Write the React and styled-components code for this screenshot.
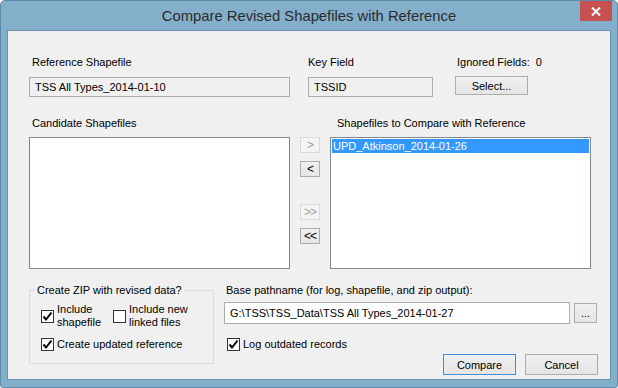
import React from 'react';
import styled, { createGlobalStyle } from 'styled-components';

const Global = createGlobalStyle`
  html, body { margin: 0; padding: 0; background: #ffffff; }
  body { font-family: "Liberation Sans", Arial, sans-serif; }
  * { box-sizing: border-box; }
`;

const UI_FONT = `"Liberation Sans", Arial, sans-serif`;

const Frame = styled.div`
  position: relative;
  width: 618px;
  height: 388px;
  background: #83afca;
  border: 1px solid #5f8bab;
  border-radius: 5px 5px 3px 3px;
  display: flex;
  flex-direction: column;
  padding: 0 6px 7px 6px;
`;

const TitleBar = styled.div`
  height: 29px;
  display: flex;
  align-items: center;
  justify-content: center;
  font-family: ${UI_FONT};
  font-size: 14.8px;
  color: #2b2b2b;
  padding-top: 1px;
`;

const CloseButton = styled.div`
  position: absolute;
  top: 0;
  right: 5px;
  width: 32px;
  height: 20px;
  background: #c75050;
  display: flex;
  align-items: center;
  justify-content: center;
`;

const Client = styled.div`
  flex: 1;
  background: #f0f0f0;
  border: 1px solid #6a93b0;
  padding: 23px 0 0 21px;
  display: flex;
  flex-direction: column;
  font-family: ${UI_FONT};
  font-size: 11px;
  color: #000;
`;

const TopGrid = styled.div`
  display: grid;
  grid-template-columns: 279px 147px 1fr;
`;

const Field = styled.div`
  display: flex;
  flex-direction: column;
`;

const Label = styled.div`
  height: 16px;
  line-height: 16px;
  padding-left: ${p => p.$inset || 0}px;
  white-space: nowrap;
`;

const ReadOnlyBox = styled.div`
  width: ${p => p.$w}px;
  height: 20px;
  margin-top: 7px;
  border: 1px solid #acacac;
  background: #f0f0f0;
  padding-left: 5px;
  line-height: 18px;
  white-space: nowrap;
`;

const PushButton = styled.div`
  width: ${p => p.$w}px;
  height: ${p => p.$h}px;
  margin-top: ${p => p.$mt || 0}px;
  border: 1px solid ${p => (p.$default ? '#3c8fd8' : '#adadad')};
  background: linear-gradient(#f0f0f0, #e5e5e5);
  display: flex;
  align-items: center;
  justify-content: center;
  font-size: 11px;
  color: #000;
  flex: none;
`;

const ListRow = styled.div`
  display: flex;
  margin-top: 18px;
`;

const ListColumn = styled.div`
  display: flex;
  flex-direction: column;
`;

const ListBox = styled.div`
  width: ${p => p.$w}px;
  height: 132px;
  margin-top: 6px;
  background: #ffffff;
  border: 1px solid #828790;
  padding: 1px;
`;

const ListItem = styled.div`
  height: 14px;
  line-height: 14px;
  padding-left: 1px;
  background: ${p => (p.$selected ? '#3399ff' : 'transparent')};
  color: ${p => (p.$selected ? '#ffffff' : '#000')};
  white-space: nowrap;
`;

const ArrowColumn = styled.div`
  display: flex;
  flex-direction: column;
  margin: 22px 10px 0 10px;
  gap: 8px;
`;

const ArrowButton = styled.div`
  width: 20px;
  height: 16px;
  margin-top: ${p => p.$mt || 0}px;
  border: 1px solid ${p => (p.$disabled ? '#d9d9d9' : '#adadad')};
  background: ${p => (p.$disabled ? '#f4f4f4' : 'linear-gradient(#f0f0f0, #e5e5e5)')};
  color: ${p => (p.$disabled ? '#a0a0a0' : '#000')};
  font-size: 12px;
  line-height: 14px;
  text-align: center;
  letter-spacing: -1px;
`;

const BottomRow = styled.div`
  display: flex;
  margin-top: 13px;
`;

const GroupBox = styled.fieldset`
  width: 185px;
  height: 82px;
  margin: 0;
  padding: 5px 0 0 11px;
  border: 1px solid #dcdcdc;
  display: flex;
  flex-direction: column;
  gap: 9px;
`;

const Legend = styled.legend`
  padding: 0 2px;
  margin-left: -6px;
  line-height: 16px;
  font-size: 11px;
`;

const CheckRow = styled.div`
  display: flex;
  align-items: center;
  gap: ${p => p.$gap || 0}px;
`;

const CheckItem = styled.label`
  display: flex;
  align-items: center;
  gap: 3px;
  line-height: 13px;
  white-space: nowrap;
`;

const Box = styled.span`
  width: 13px;
  height: 13px;
  border: 1px solid #333333;
  background: #ffffff;
  display: flex;
  align-items: center;
  justify-content: center;
  flex: none;
`;

const RightPane = styled.div`
  margin-left: 10px;
  width: 375px;
  display: flex;
  flex-direction: column;
`;

const PathRow = styled.div`
  display: flex;
  align-items: center;
  gap: 4px;
  margin-top: 4px;
`;

const TextInput = styled.div`
  width: 346px;
  height: 22px;
  border: 1px solid #abadb3;
  background: #ffffff;
  padding-left: 5px;
  line-height: 20px;
  white-space: nowrap;
`;

const LogRow = styled.div`
  margin-top: 14px;
  padding-left: 3px;
`;

const ButtonRow = styled.div`
  display: flex;
  justify-content: flex-end;
  gap: 9px;
  margin-top: 3px;
  padding-right: 1px;
`;

const Check = ({ checked }) => (
  <Box>
    {checked && (
      <svg width="11" height="11" viewBox="0 0 11 11">
        <path d="M1.5 5.5 L4 8.5 L9.5 1.5" fill="none" stroke="#000" strokeWidth="2" />
      </svg>
    )}
  </Box>
);

const CheckBox = ({ checked, children }) => (
  <CheckItem>
    <Check checked={checked} />
    <span>{children}</span>
  </CheckItem>
);

export default function App() {
  return (
    <>
      <Global />
      <Frame>
        <TitleBar>Compare Revised Shapefiles with Reference</TitleBar>
        <CloseButton>
          <svg width="10" height="9" viewBox="0 0 10 9">
            <path d="M1 0.5 L9 8.5 M9 0.5 L1 8.5" stroke="#fff" strokeWidth="2" />
          </svg>
        </CloseButton>
        <Client>
          <TopGrid>
            <Field>
              <Label $inset={3}>Reference Shapefile</Label>
              <ReadOnlyBox $w={261}>TSS All Types_2014-01-10</ReadOnlyBox>
            </Field>
            <Field>
              <Label>Key Field</Label>
              <ReadOnlyBox $w={125}>TSSID</ReadOnlyBox>
            </Field>
            <Field>
              <Label $inset={2}>Ignored Fields:&nbsp;&nbsp;0</Label>
              <PushButton $w={73} $h={19} $mt={6}>Select...</PushButton>
            </Field>
          </TopGrid>

          <ListRow>
            <ListColumn>
              <Label $inset={3}>Candidate Shapefiles</Label>
              <ListBox $w={261} />
            </ListColumn>
            <ArrowColumn>
              <ArrowButton $disabled>&gt;</ArrowButton>
              <ArrowButton>&lt;</ArrowButton>
              <ArrowButton $disabled $mt={19}>&gt;&gt;</ArrowButton>
              <ArrowButton>&lt;&lt;</ArrowButton>
            </ArrowColumn>
            <ListColumn>
              <Label $inset={7}>Shapefiles to Compare with Reference</Label>
              <ListBox $w={261}>
                <ListItem $selected>UPD_Atkinson_2014-01-26</ListItem>
              </ListBox>
            </ListColumn>
          </ListRow>

          <BottomRow>
            <GroupBox>
              <Legend>Create ZIP with revised data?</Legend>
              <CheckRow $gap={12}>
                <CheckBox checked>
                  Include
                  <br />
                  shapefile
                </CheckBox>
                <CheckBox>
                  Include new
                  <br />
                  linked files
                </CheckBox>
              </CheckRow>
              <CheckRow>
                <CheckBox checked>Create updated reference</CheckBox>
              </CheckRow>
            </GroupBox>

            <RightPane>
              <Label $inset={2}>Base pathname (for log, shapefile, and zip output):</Label>
              <PathRow>
                <TextInput>G:\TSS\TSS_Data\TSS All Types_2014-01-27</TextInput>
                <PushButton $w={23} $h={20}>...</PushButton>
              </PathRow>
              <LogRow>
                <CheckBox checked>Log outdated records</CheckBox>
              </LogRow>
              <ButtonRow>
                <PushButton $w={73} $h={21} $default>Compare</PushButton>
                <PushButton $w={73} $h={21}>Cancel</PushButton>
              </ButtonRow>
            </RightPane>
          </BottomRow>
        </Client>
      </Frame>
    </>
  );
}
